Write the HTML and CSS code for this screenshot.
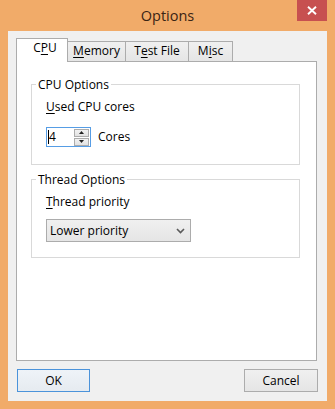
FILE: index.html
```html
<!DOCTYPE html>
<html>
<head>
<meta charset="utf-8">
<link rel="stylesheet" href="styles.css">
</head>
<body>
<div class="window">
  <div class="titlebar">
    <span class="tb-spacer"></span>
    <div class="title">Options</div>
    <div class="close">
      <svg width="10" height="9" viewBox="0 0 10 9"><path d="M1 0.8 L9 8.2 M9 0.8 L1 8.2" stroke="#fff" stroke-width="1.9" fill="none"/></svg>
    </div>
  </div>
  <div class="client">
    <div class="tabctl">
      <div class="tabstrip">
        <div class="tab sel t-cpu">C<u>P</u>U</div>
        <div class="tab t-mem"><u>M</u>emory</div>
        <div class="tab t-test">T<u>e</u>st File</div>
        <div class="tab t-misc">M<u>i</u>sc</div>
      </div>
      <div class="panel">
        <fieldset class="group g-cpu">
          <legend>CPU Options</legend>
          <div class="gbody">
            <div class="label"><u>U</u>sed CPU cores</div>
            <div class="spinrow">
              <div class="spin">
                <span class="caret"></span><span class="val">4</span>
                <div class="spinbtns">
                  <div class="sb"><svg width="5" height="3" viewBox="0 0 5 3"><path d="M0 3 L2.5 0 L5 3 Z" fill="#222"/></svg></div>
                  <div class="sb"><svg width="5" height="3" viewBox="0 0 5 3"><path d="M0 0 L5 0 L2.5 3 Z" fill="#222"/></svg></div>
                </div>
              </div>
              <span class="unit">Cores</span>
            </div>
          </div>
        </fieldset>
        <fieldset class="group g-thread">
          <legend>Thread Options</legend>
          <div class="gbody">
            <div class="label"><u>T</u>hread priority</div>
            <div class="combo">
              <span>Lower priority</span>
              <svg width="9" height="6" viewBox="0 0 9 6"><path d="M1 1 L4.5 4.5 L8 1" stroke="#5a5a5a" stroke-width="1.6" fill="none"/></svg>
            </div>
          </div>
        </fieldset>
      </div>
    </div>
    <div class="buttons">
      <div class="btn ok">OK</div>
      <div class="btn cancel">Cancel</div>
    </div>
  </div>
</div>
</body>
</html>
```
FILE: styles.css
```css
html, body {
  margin: 0;
  padding: 0;
}
body {
  width: 335px;
  height: 409px;
  overflow: hidden;
  font-family: "Open Sans", "Noto Sans", sans-serif;
  font-size: 12px;
  color: #000;
}
.window {
  width: 335px;
  height: 409px;
  box-sizing: border-box;
  background: #f1ab69;
  padding: 0 8px 8px;
  display: flex;
  flex-direction: column;
}
.titlebar {
  height: 31px;
  flex: none;
  display: grid;
  grid-template-columns: 1fr auto 1fr;
}
.title {
  font-size: 14.5px;
  line-height: 31px;
  color: #3a2414;
}
.close {
  justify-self: end;
  width: 30px;
  height: 21px;
  background: #c75050;
  display: flex;
  align-items: center;
  justify-content: center;
}
.client {
  flex: 1;
  background: #f0f0f0;
  padding-top: 7px;
  display: flex;
  flex-direction: column;
}
.tabctl {
  margin: 0 10px 0 8px;
}
.tabstrip {
  height: 23px;
  display: flex;
  align-items: flex-end;
}
.tab {
  box-sizing: border-box;
  height: 20px;
  border: 1px solid #acacac;
  border-bottom: none;
  background: linear-gradient(#f0f0f0, #e5e5e5);
  margin-left: -1px;
  text-align: center;
  line-height: 18px;
  white-space: nowrap;
}
.tab.sel {
  height: 24px;
  margin-left: 0;
  margin-bottom: -1px;
  background: #fff;
  position: relative;
  z-index: 1;
  padding-left: 6px;
}
.t-cpu { width: 52px; }
.t-mem { width: 59px; }
.t-test { width: 64px; }
.t-misc { width: 45px; }
u {
  text-decoration: underline;
  text-underline-offset: 2px;
  text-decoration-thickness: 1px;
}
.panel {
  box-sizing: border-box;
  height: 300px;
  border: 1px solid #acacac;
  background: #fff;
  padding: 15px 16px 0 14px;
}
.group {
  box-sizing: border-box;
  margin: 0;
  padding: 0;
  border: 1px solid #d9d9d9;
  min-width: 0;
}
.group legend {
  margin-left: 4px;
  padding: 0 2px;
  line-height: 15px;
}
.g-cpu { height: 88px; }
.g-thread { height: 86px; margin-top: 7px; }
.gbody {
  padding: 7px 0 0 14px;
}
.label {
  line-height: 16px;
}
.spinrow {
  margin-top: 12px;
  display: flex;
  align-items: center;
  gap: 7px;
}
.spin {
  box-sizing: border-box;
  width: 45px;
  height: 20px;
  border: 1px solid #569de5;
  background: #fff;
  display: flex;
  align-items: center;
  padding-left: 1px;
}
.caret {
  width: 1px;
  height: 14px;
  background: #000;
}
.val {
  line-height: 16px;
  margin-left: 0px;
}
.spinbtns {
  margin-left: auto;
  margin-right: 1px;
  display: flex;
  flex-direction: column;
  gap: 1px;
}
.sb {
  box-sizing: border-box;
  width: 15px;
  height: 8px;
  border: 1px solid #acacac;
  background: linear-gradient(#f2f2f2, #e2e2e2);
  display: flex;
  align-items: center;
  justify-content: center;
}
.unit {
  line-height: 16px;
}
.combo {
  box-sizing: border-box;
  margin-top: 9px;
  width: 145px;
  height: 23px;
  border: 1px solid #acacac;
  background: linear-gradient(#f0f0f0, #e5e5e5);
  display: flex;
  align-items: center;
  justify-content: space-between;
  padding: 0 5px 0 3px;
}
.buttons {
  margin-top: 8px;
  padding: 0 9px;
  display: flex;
  justify-content: space-between;
}
.btn {
  box-sizing: border-box;
  height: 23px;
  border: 1px solid #acacac;
  background: linear-gradient(#f0f0f0, #e5e5e5);
  text-align: center;
  line-height: 21px;
}
.btn.ok {
  width: 73px;
  border-color: #4b93da;
  background: linear-gradient(#eef3f8, #e6ebf0);
}
.btn.cancel {
  width: 74px;
}
```
